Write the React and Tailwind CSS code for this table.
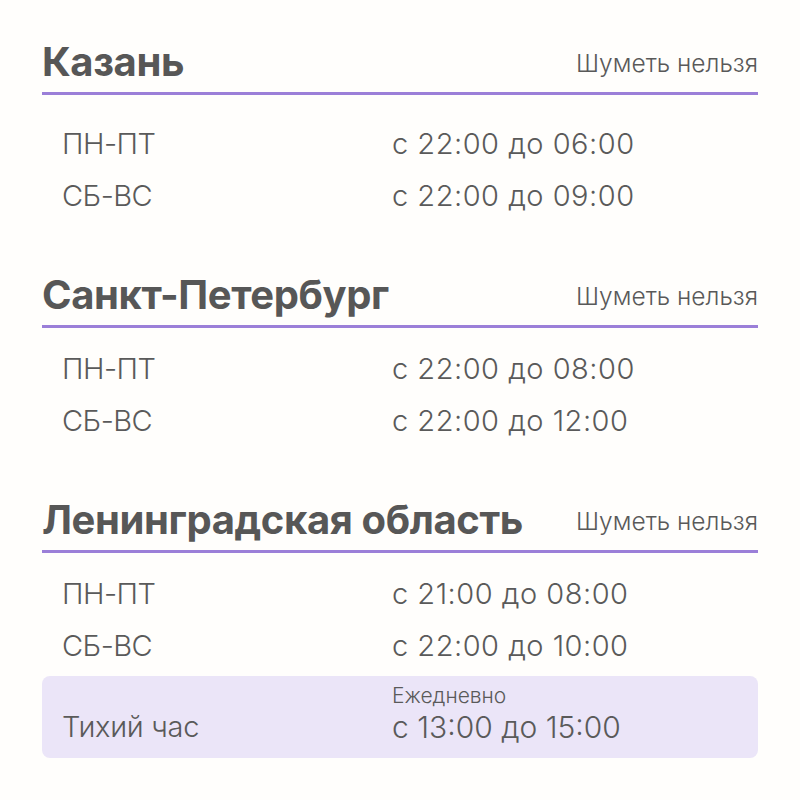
const sections = [
  {
    city: "Казань",
    first: true,
    rows: [
      ["ПН-ПТ", "с 22:00 до 06:00"],
      ["СБ-ВС", "с 22:00 до 09:00"],
    ],
  },
  {
    city: "Санкт-Петербург",
    rows: [
      ["ПН-ПТ", "с 22:00 до 08:00"],
      ["СБ-ВС", "с 22:00 до 12:00"],
    ],
  },
  {
    city: "Ленинградская область",
    rows: [
      ["ПН-ПТ", "с 21:00 до 08:00"],
      ["СБ-ВС", "с 22:00 до 10:00"],
    ],
    nap: true,
  },
];

function Section({ city, rows, first, nap }) {
  return (
    <section className={first ? "" : "mt-[49px]"}>
      <div className="flex items-end justify-between border-b-[3px] border-[#9b7fd8] pb-[6px]">
        <h2 className="text-[40px] font-bold leading-[48px] tracking-[-0.4px] text-[#575757]">
          {city}
        </h2>
        <span className="mb-[9px] text-[24.5px] font-light leading-[28px] text-[#595959]">
          Шуметь нельзя
        </span>
      </div>
      <div className={first ? "mt-[23px]" : "mt-[15px]"}>
        {rows.map(([day, time]) => (
          <div key={day} className="flex h-[52px] items-center pl-5 text-[29px] font-light leading-[52px] text-[#5a5a5a]">
            <span className="w-[330px] tracking-[-0.5px]">{day}</span>
            <span className="tracking-[0.5px]">{time}</span>
          </div>
        ))}
      </div>
      {nap && (
        <div className="mt-1 flex items-end rounded-lg bg-[#ebe5f8] pb-[14px] pl-5 pt-[8px] font-light text-[#5a5a5a]">
          <span className="w-[330px] text-[29px] leading-[34px] tracking-[-0.3px]">Тихий час</span>
          <div className="flex flex-col">
            <span className="text-[21px] leading-[24px]">Ежедневно</span>
            <span className="mt-[2px] text-[30px] leading-[34px]">с 13:00 до 15:00</span>
          </div>
        </div>
      )}
    </section>
  );
}

export default function App() {
  return (
    <div className="min-h-screen bg-[#fffefc] px-[42px] pt-[38px] font-['Inter',sans-serif]">
      {sections.map((s) => (
        <Section key={s.city} {...s} />
      ))}
    </div>
  );
}
